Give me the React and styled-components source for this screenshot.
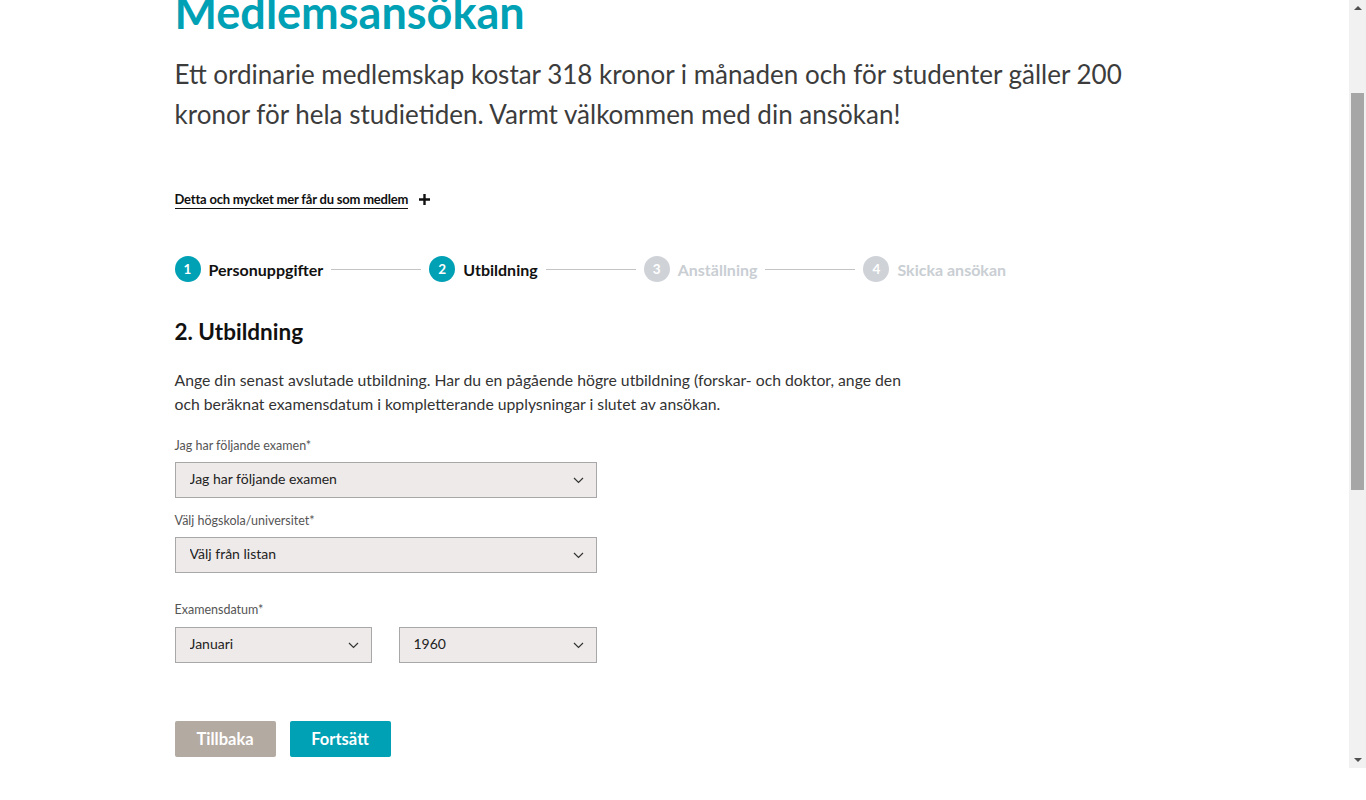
import { useLayoutEffect } from 'react';
import styled, { createGlobalStyle } from 'styled-components';

const GlobalStyle = createGlobalStyle`
  html, body {
    margin: 0;
    padding: 0;
    background: #fff;
  }
  html {
    scrollbar-width: none;
  }
  body {
    padding-right: 17px;
    font-family: 'Lato', 'Noto Sans', sans-serif;
    color: #333;
  }
`;

/* stand-in for the browser's classic scrollbar seen in the capture */
const ScrollTrack = styled.div`
  position: fixed;
  top: 0;
  right: 0;
  width: 17px;
  height: 768px;
  background: #f1f1f1;
  display: flex;
  flex-direction: column;
  align-items: center;
`;

const ScrollArrow = styled.div`
  width: 0;
  height: 0;
  margin: 6px 0;
  border-left: 4px solid transparent;
  border-right: 4px solid transparent;
  ${(p) => (p.$down ? 'border-top: 4px solid #505050;' : 'border-bottom: 4px solid #505050;')}
`;

const ScrollThumb = styled.div`
  width: 13px;
  height: 397px;
  margin-top: 77px;
  background: #a6a6a6;
`;

const ScrollSpacer = styled.div`
  flex: 1;
`;

const Page = styled.main`
  max-width: 1000px;
  margin: 0 auto;
  padding: 140px 0 780px;
`;

const Title = styled.h1`
  margin: 0;
  font-size: 45px;
  line-height: 50px;
  font-weight: 700;
  color: #00a0b5;
`;

const Intro = styled.p`
  margin: 17px 0 0;
  font-size: 26px;
  line-height: 40px;
  color: #3c3c3c;
  max-width: 980px;
`;

const MoreRow = styled.div`
  margin-top: 56px;
  display: flex;
  align-items: center;
  gap: 11px;
`;

const MoreLink = styled.a`
  font-size: 13px;
  line-height: 18px;
  font-weight: 700;
  color: #111;
  text-decoration: none;
  border-bottom: 1px solid #111;
  letter-spacing: -0.2px;
`;

const Plus = styled.svg`
  width: 11px;
  height: 11px;
`;

const Steps = styled.ol`
  list-style: none;
  margin: 47px 0 0;
  padding: 0;
  display: flex;
  align-items: center;
`;

const Step = styled.li`
  display: flex;
  align-items: center;
  gap: 8px;
  font-size: 16px;
  font-weight: 700;
  color: ${(p) => (p.$active ? '#111' : '#c9ced3')};
`;

const Circle = styled.span`
  width: 26px;
  height: 26px;
  border-radius: 50%;
  background: ${(p) => (p.$active ? '#00a0b5' : '#cfd3d8')};
  color: #fff;
  font-size: 13.5px;
  font-weight: 700;
  display: flex;
  align-items: center;
  justify-content: center;
`;

const Connector = styled.span`
  width: 90px;
  height: 1px;
  margin-left: 8px;
  background: #c4c4c4;
`;

const Heading = styled.h2`
  margin: 35px 0 0;
  font-size: 22.5px;
  line-height: 30px;
  font-weight: 700;
  color: #111;
`;

const Lead = styled.p`
  margin: 21px 0 0;
  max-width: 740px;
  font-size: 15.75px;
  line-height: 24px;
  color: #333;
`;

const Field = styled.div`
  margin-top: ${(p) => p.$gap}px;
  width: 422px;
`;

const Label = styled.label`
  display: block;
  font-size: 12.5px;
  line-height: 18px;
  color: #555;
  margin-bottom: ${(p) => p.$space || 7}px;
`;

const SelectRow = styled.div`
  display: flex;
  justify-content: space-between;
`;

const SelectWrap = styled.div`
  position: relative;
  width: ${(p) => p.$width || 422}px;
`;

const Select = styled.select`
  appearance: none;
  width: 100%;
  height: 36px;
  padding: 0 40px 3px 14px;
  background: #eeeae9;
  border: 1px solid #a8a8a8;
  border-radius: 0;
  font-family: inherit;
  font-size: 14px;
  color: #222;
  outline: none;
`;

const Chevron = styled.svg`
  position: absolute;
  right: 13px;
  top: 15px;
  width: 11px;
  height: 7px;
  pointer-events: none;
`;

const Buttons = styled.div`
  margin-top: 58px;
  display: flex;
  gap: 14px;
`;

const Button = styled.button`
  height: 36px;
  min-width: 101px;
  padding: 0 20px;
  border: none;
  border-radius: 2px;
  background: ${(p) => (p.$primary ? '#00a0b5' : '#b3aaa1')};
  color: #fff;
  font-family: inherit;
  font-size: 16.5px;
  font-weight: 700;
  cursor: pointer;
`;

function Dropdown({ value, options, width }) {
  return (
    <SelectWrap $width={width}>
      <Select defaultValue={value}>
        {options.map((o) => (
          <option key={o}>{o}</option>
        ))}
      </Select>
      <Chevron viewBox="0 0 11 7">
        <path d="M1 1l4.5 4.5L10 1" fill="none" stroke="#333" strokeWidth="1.2" />
      </Chevron>
    </SelectWrap>
  );
}

const steps = [
  { n: 1, label: 'Personuppgifter', active: true },
  { n: 2, label: 'Utbildning', active: true },
  { n: 3, label: 'Anställning', active: false },
  { n: 4, label: 'Skicka ansökan', active: false },
];

export default function App() {
  useLayoutEffect(() => {
    window.scrollTo(0, 153);
  }, []);

  return (
    <>
      <GlobalStyle />
      <Page>
        <Title>Medlemsansökan</Title>
        <Intro>
          Ett ordinarie medlemskap kostar 318 kronor i månaden och för studenter gäller 200
          kronor för hela studietiden. Varmt välkommen med din ansökan!
        </Intro>

        <MoreRow>
          <MoreLink href="#">Detta och mycket mer får du som medlem</MoreLink>
          <Plus viewBox="0 0 11 11">
            <path d="M5.5 0v11M0 5.5h11" stroke="#111" strokeWidth="2.4" />
          </Plus>
        </MoreRow>

        <Steps>
          {steps.map((s, i) => (
            <Step key={s.n} $active={s.active}>
              {i > 0 && <Connector />}
              <Circle $active={s.active}>{s.n}</Circle>
              {s.label}
            </Step>
          ))}
        </Steps>

        <Heading>2. Utbildning</Heading>
        <Lead>
          Ange din senast avslutade utbildning. Har du en pågående högre utbildning (forskar- och
          doktor, ange den och beräknat examensdatum i kompletterande upplysningar i slutet av
          ansökan.
        </Lead>

        <Field $gap={21}>
          <Label>Jag har följande examen*</Label>
          <Dropdown value="Jag har följande examen" options={['Jag har följande examen', 'Kandidatexamen', 'Masterexamen']} />
        </Field>

        <Field $gap={14}>
          <Label>Välj högskola/universitet*</Label>
          <Dropdown value="Välj från listan" options={['Välj från listan', 'Uppsala universitet', 'Lunds universitet']} />
        </Field>

        <Field $gap={28}>
          <Label $space={8}>Examensdatum*</Label>
          <SelectRow>
            <Dropdown width={197} value="Januari" options={['Januari', 'Februari', 'Mars']} />
            <Dropdown width={198} value="1960" options={['1960', '1961', '1962']} />
          </SelectRow>
        </Field>

        <Buttons>
          <Button>Tillbaka</Button>
          <Button $primary>Fortsätt</Button>
        </Buttons>
      </Page>

      <ScrollTrack aria-hidden="true">
        <ScrollArrow />
        <ScrollThumb />
        <ScrollSpacer />
        <ScrollArrow $down />
      </ScrollTrack>
    </>
  );
}
